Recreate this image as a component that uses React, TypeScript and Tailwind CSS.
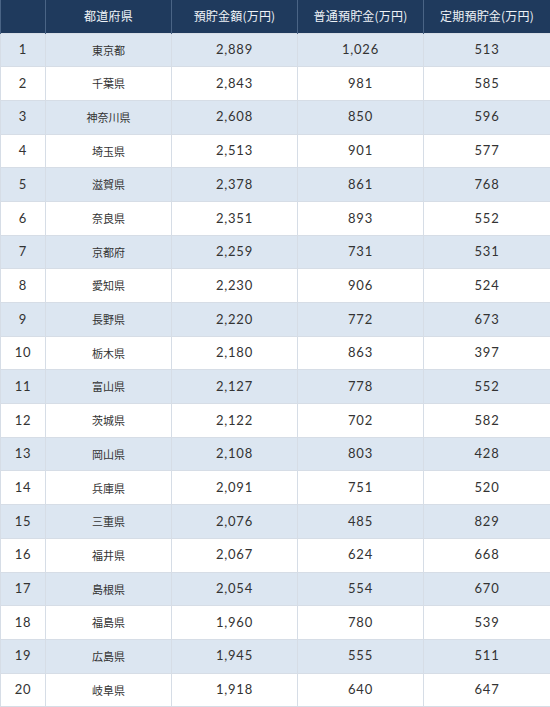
const rows = [
  { rank: 1, pref: "東京都", total: "2,889", normal: "1,026", fixed: "513" },
  { rank: 2, pref: "千葉県", total: "2,843", normal: "981", fixed: "585" },
  { rank: 3, pref: "神奈川県", total: "2,608", normal: "850", fixed: "596" },
  { rank: 4, pref: "埼玉県", total: "2,513", normal: "901", fixed: "577" },
  { rank: 5, pref: "滋賀県", total: "2,378", normal: "861", fixed: "768" },
  { rank: 6, pref: "奈良県", total: "2,351", normal: "893", fixed: "552" },
  { rank: 7, pref: "京都府", total: "2,259", normal: "731", fixed: "531" },
  { rank: 8, pref: "愛知県", total: "2,230", normal: "906", fixed: "524" },
  { rank: 9, pref: "長野県", total: "2,220", normal: "772", fixed: "673" },
  { rank: 10, pref: "栃木県", total: "2,180", normal: "863", fixed: "397" },
  { rank: 11, pref: "富山県", total: "2,127", normal: "778", fixed: "552" },
  { rank: 12, pref: "茨城県", total: "2,122", normal: "702", fixed: "582" },
  { rank: 13, pref: "岡山県", total: "2,108", normal: "803", fixed: "428" },
  { rank: 14, pref: "兵庫県", total: "2,091", normal: "751", fixed: "520" },
  { rank: 15, pref: "三重県", total: "2,076", normal: "485", fixed: "829" },
  { rank: 16, pref: "福井県", total: "2,067", normal: "624", fixed: "668" },
  { rank: 17, pref: "島根県", total: "2,054", normal: "554", fixed: "670" },
  { rank: 18, pref: "福島県", total: "1,960", normal: "780", fixed: "539" },
  { rank: 19, pref: "広島県", total: "1,945", normal: "555", fixed: "511" },
  { rank: 20, pref: "岐阜県", total: "1,918", normal: "640", fixed: "647" },
];

const headers = ["都道府県", "預貯金額(万円)", "普通預貯金(万円)", "定期預貯金(万円)"];

export default function App() {
  return (
    <div className="w-[550px] h-[707px] bg-white overflow-hidden font-['Lato','Noto_Sans_CJK_JP',sans-serif] text-[#333]">
      <table className="w-[550px] table-fixed border-collapse">
        <colgroup>
          <col className="w-[45px]" />
          <col className="w-[126px]" />
          <col className="w-[126px]" />
          <col className="w-[126px]" />
          <col className="w-[127px]" />
        </colgroup>
        <thead>
          <tr className="h-[33px] bg-[#1f3a5d]">
            <th className="border-x border-[#4a6485] p-0"></th>
            {headers.map((h) => (
              <th
                key={h}
                className="border-x border-[#4a6485] p-0 text-center text-[12px] font-normal tracking-[0.2px] text-[#eef2f7] font-['Noto_Sans_CJK_JP',sans-serif]"
              >
                {h}
              </th>
            ))}
          </tr>
        </thead>
        <tbody>
          {rows.map((r) => (
            <tr
              key={r.rank}
              className={`h-[33.7px] ${r.rank % 2 === 1 ? "bg-[#dce6f1]" : "bg-white"}`}
            >
              <td className="border border-[#d6dde6] p-0 text-center text-[13px] tracking-[0.8px]">{r.rank}</td>
              <td className="border border-[#d6dde6] p-0 text-center text-[11px] font-['Noto_Sans_CJK_JP',sans-serif]">
                {r.pref}
              </td>
              <td className="border border-[#d6dde6] p-0 text-center text-[13px] tracking-[0.8px]">{r.total}</td>
              <td className="border border-[#d6dde6] p-0 text-center text-[13px] tracking-[0.8px]">{r.normal}</td>
              <td className="border border-[#d6dde6] p-0 text-center text-[13px] tracking-[0.8px]">{r.fixed}</td>
            </tr>
          ))}
        </tbody>
      </table>
    </div>
  );
}
